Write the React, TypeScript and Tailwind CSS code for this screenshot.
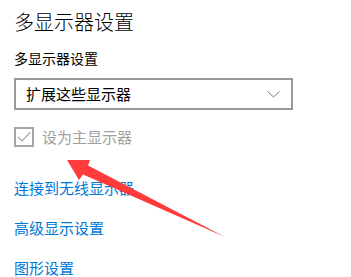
import React from "react";

// 多显示器设置 – Windows settings snippet with red annotation arrow

const font = "font-['Microsoft_YaHei','Noto_Sans_CJK_SC',sans-serif]";

export default function App() {
  return (
    <div className={`relative h-[277px] w-[351px] overflow-hidden bg-white pl-[14px] text-black ${font}`}>
      <div className="mt-[10px] text-[20px] font-light leading-[24px]">多显示器设置</div>

      <div className="mt-[14px] text-[14px] leading-[20px]">多显示器设置</div>

      <div className="mt-[10px] flex h-[32px] w-[279px] items-center justify-between border-2 border-[#999999] pl-[10px] pr-[10px]">
        <span className="text-[15px] leading-[20px]">扩展这些显示器</span>
        <svg width="13" height="7" viewBox="0 0 13 7" className="mr-[1px]">
          <path d="M0.5 0.5 L6.5 6 L12.5 0.5" fill="none" stroke="#7a7a7a" strokeWidth="1" />
        </svg>
      </div>

      <div className="mt-[17px] flex h-[20px] items-center gap-[8px]">
        <div className="flex h-[20px] w-[20px] items-center justify-center border-2 border-[#a6a6a6]">
          <svg width="14" height="12" viewBox="0 0 14 12">
            <path d="M1 6 L5 10 L13 1.5" fill="none" stroke="#a6a6a6" strokeWidth="1.2" />
          </svg>
        </div>
        <span className="text-[15px] leading-[20px] text-[#a0a0a0]">设为主显示器</span>
      </div>

      <div className="mt-[31px] text-[15px] leading-[20px] text-[#0078d7]">连接到无线显示器</div>
      <div className="mt-[20px] text-[15px] leading-[20px] text-[#0078d7]">高级显示设置</div>
      <div className="mt-[20px] text-[15px] leading-[20px] text-[#0078d7]">图形设置</div>

      {/* red annotation arrow */}
      <svg className="pointer-events-none absolute left-0 top-0" width="351" height="277" viewBox="0 0 351 277">
        <polygon
          points="67,160 90,160 88,165.5 225,237 83,174.5 79,180"
          fill="#ff3b3b"
        />
      </svg>
    </div>
  );
}
